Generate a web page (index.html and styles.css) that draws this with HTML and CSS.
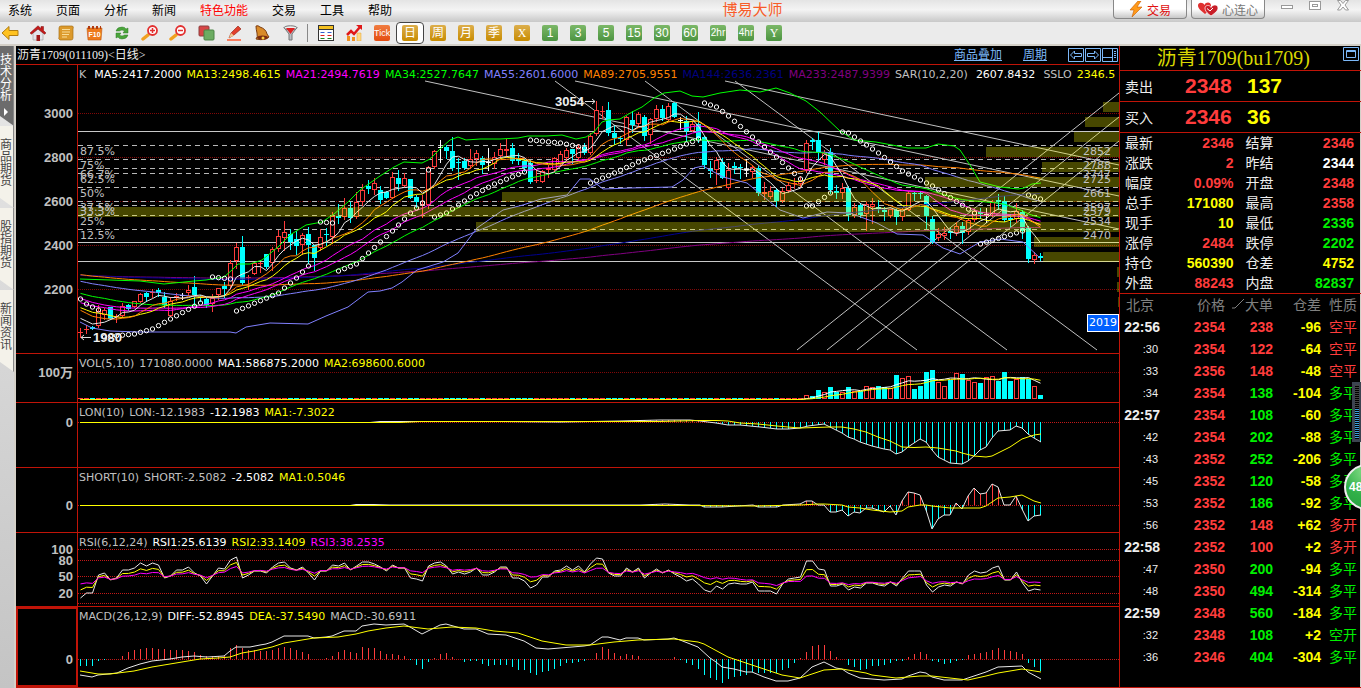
FILE: index.html
```html
<!DOCTYPE html>
<html lang="zh-CN">
<head>
  <meta charset="UTF-8" />
  <meta name="viewport" content="width=device-width, initial-scale=1.0"/>
  <title>博易大师</title>
  <link rel="stylesheet" href="styles.css">
</head>
<body>
  <header class="menubar">
    <nav class="menu">
      <button type="button">系统</button>
      <button type="button">页面</button>
      <button type="button">分析</button>
      <button type="button">新闻</button>
      <button type="button" class="hot">特色功能</button>
      <button type="button">交易</button>
      <button type="button">工具</button>
      <button type="button">帮助</button>
    </nav>
    <h1 class="app-name">博易大师</h1>
    <div class="window-tools">
      <button type="button" class="pill pill-trade">
        <svg width="14" height="16" viewBox="0 0 14 16"><path d="M9 0 1 9h4L3 16 13 6H8l4-6z" fill="#ff9a1a" stroke="#c85a00" stroke-width=".6"/></svg>
        交易
      </button>
      <button type="button" class="pill">
        <svg width="20" height="14" viewBox="0 0 20 14"><path d="M7 12C2 8 0 6 0 3.500C0 0 5 0 6.500 3 8-.5 13 0 13 3.500 13 6 11 9 7 12z" fill="#e03030"/><path d="M13 14C9 11 7 9 7 6c0-3 5-3.500 6-.5C14.500 2 20 2 20 6c0 3-3 5-7 8z" fill="#c81e28" stroke="#fff" stroke-width=".7"/><path d="M9 6.500 12 9l3-3" stroke="#fff" fill="none"/></svg>
        心连心
      </button>
      <div class="win-controls">
        <button type="button" aria-label="最小化"><svg width="14" height="12" viewBox="0 0 14 12"><rect x="1.500" y="5.500" width="11" height="3" fill="#fff" stroke="#999"/></svg></button>
        <button type="button" aria-label="还原"><svg width="14" height="12" viewBox="0 0 14 12"><rect x="1.500" y="1.500" width="11" height="8" fill="#fff" stroke="#999"/><rect x="4.500" y="4.500" width="5" height="2" fill="none" stroke="#999"/></svg></button>
        <button type="button" aria-label="关闭"><svg width="14" height="12" viewBox="0 0 14 12"><path d="M1.500.5h3L7 3.500 9.500.5h3L9 5l3.500 5h-3L7 7l-2.500 3h-3L5 5z" fill="#fff" stroke="#999"/></svg></button>
      </div>
    </div>
  </header>

  <div class="toolbar">
    <button type="button" aria-label="后退"><svg width="18" height="16" viewBox="0 0 18 16"><path d="M1 8 8 1.500v4h9v5H8v4z" fill="#ffc21f" stroke="#b07c10"/></svg></button>
    <button type="button" aria-label="首页"><svg width="18" height="16" viewBox="0 0 18 16"><path d="M4 8v7h10V8L9 4z" fill="#e4e4ea" stroke="#999" stroke-width=".6"/><path d="M1 8 9 .8 12 3.500V1.500h2.500v4L17 8l-1.500 1.200L9 4 2.500 9.200z" fill="#c41a1a" stroke="#7c1010" stroke-width=".5"/><rect x="7.500" y="10" width="3.500" height="6" fill="#a01818"/></svg></button>
    <button type="button" aria-label="记事"><svg width="16" height="16" viewBox="0 0 16 16"><path d="M3 1h11q2 0 1 3v9q0 2-2 2H2q-2-1-1-3V3q0-2 2-2z" fill="#dc9a2c" stroke="#a87018" stroke-width=".7"/><path d="M4 4.500h8M4 7h8M4 9.500h7M4 12h5" stroke="#f8dc98"/></svg></button>
    <button type="button" aria-label="F10"><svg width="17" height="16" viewBox="0 0 17 16"><path d="M1 3h15l-1 12H2z" fill="#ee7a1c" stroke="#c05a10" stroke-width=".6"/><path d="M2 1h2v3H2zM6 1h2v3H6zM10 1h2v3h-2zM14 1h1v3h-1z" fill="#b03a10"/><text x="8.500" y="12" text-anchor="middle" class="glyph-text">F10</text></svg></button>
    <button type="button" aria-label="刷新"><svg width="16" height="16" viewBox="0 0 16 16"><path d="M2 6q1-4 6-4 3 0 4 2l2-1v5H9l1.500-2Q8 4 5.500 6zM14 10q-1 4-6 4-3 0-4-2l-2 1V8h5l-1.500 2Q8 12 10.500 10z" fill="#4aa53a" stroke="#2c7a24" stroke-width=".5"/></svg></button>
    <button type="button" aria-label="放大"><svg width="18" height="16" viewBox="0 0 18 16"><path d="M2 14l5-4" stroke="#f0a020" stroke-width="3.500" stroke-linecap="round"/><circle cx="11.500" cy="5.500" r="4.500" fill="#fff" stroke="#e23030" stroke-width="1.800"/><path d="M9 5.500h5M11.500 3v5" stroke="#e23030" stroke-width="1.500"/></svg></button>
    <button type="button" aria-label="缩小"><svg width="18" height="16" viewBox="0 0 18 16"><path d="M2 14l5-4" stroke="#f0a020" stroke-width="3.500" stroke-linecap="round"/><circle cx="11.500" cy="5.500" r="4.500" fill="#fff" stroke="#e23030" stroke-width="1.800"/><path d="M9 5.500h5" stroke="#e23030" stroke-width="1.500"/></svg></button>
    <button type="button" aria-label="叠加"><svg width="17" height="16" viewBox="0 0 17 16"><rect x="1" y="1" width="10" height="10" rx="1" fill="#d64545" stroke="#8c4040"/><rect x="6" y="5" width="10" height="10" rx="1" fill="#6cac62" stroke="#4a8445"/></svg></button>
    <button type="button" aria-label="画线"><svg width="16" height="16" viewBox="0 0 16 16"><path d="M3 13 5 8 12 1l3 3-7 6z" fill="#e2402c" stroke="#8c2010" stroke-width=".6"/><path d="M3 13l2-5 3 2.500z" fill="#f0c890"/><path d="M1 15h14" stroke="#ff5a30" stroke-width="1.500"/></svg></button>
    <button type="button" aria-label="预警"><svg width="16" height="16" viewBox="0 0 16 16"><path d="M2 1q2-1 4 1 6 2 7 7l2 3q-4 4-13 2 2-2 1-6Q2 4 2 1z" fill="#d98a28" stroke="#7c3c10"/><ellipse cx="8.500" cy="12.500" rx="5.500" ry="2" fill="#7c2c10"/><circle cx="9" cy="13" r="1.500" fill="#ffd040"/></svg></button>
    <button type="button" aria-label="筛选"><svg width="15" height="16" viewBox="0 0 15 16"><path d="M1 2.500h13L9 9v6H6V9z" fill="#b9bdc4" stroke="#777"/><ellipse cx="7.500" cy="2.800" rx="6.500" ry="2" fill="#f0f0f0" stroke="#777"/><path d="M3 3h9L7.500 9z" fill="#e02020"/></svg></button>
    <span class="separator"></span>
    <button type="button" aria-label="报价"><svg width="16" height="16" viewBox="0 0 16 16"><rect x=".5" y=".5" width="15" height="15" fill="#fff" stroke="#333"/><path d="M1 2.500h14" stroke="#f4c020" stroke-width="3"/><path d="M0 4.500h16" stroke="#333"/><path d="M2.500 7.500h4M9.500 7.500h4" stroke="#3060d0"/><path d="M2.500 10.500h4M9.500 10.500h4" stroke="#e02020"/><path d="M2.500 13.500h4M9.500 13.500h4" stroke="#208020"/></svg></button>
    <button type="button" aria-label="走势"><svg width="16" height="16" viewBox="0 0 16 16"><path d="M1 11h3v5H1zM6 12h3v4H6z" fill="#f09020"/><path d="M11 8h4v8h-4z" fill="#ffd880" stroke="#e0a030" stroke-width=".5"/><path d="M1 10 5 6l3 3 6-7" fill="none" stroke="#e01818" stroke-width="2.500"/><path d="M10 0h6v5z" fill="#e01818"/></svg></button>
    <button type="button"><span class="key key-tick">Tick</span></button>
    <button type="button" class="current"><span class="key key-gold">日</span></button>
    <button type="button"><span class="key key-gold">周</span></button>
    <button type="button"><span class="key key-gold">月</span></button>
    <button type="button"><span class="key key-gold">季</span></button>
    <button type="button"><span class="key key-gold key-serif">X</span></button>
    <button type="button"><span class="key">1</span></button>
    <button type="button"><span class="key">3</span></button>
    <button type="button"><span class="key">5</span></button>
    <button type="button"><span class="key">15</span></button>
    <button type="button"><span class="key">30</span></button>
    <button type="button"><span class="key">60</span></button>
    <button type="button"><span class="key key-small">2hr</span></button>
    <button type="button"><span class="key key-small">4hr</span></button>
    <button type="button"><span class="key key-serif">Y</span></button>
  </div>

  <main class="workspace">
    <nav class="side-tabs">
      <button type="button" class="active">技术分析<svg width="6" height="8" viewBox="0 0 6 8"><path d="M1 0l4 4-4 4z" fill="#fff"/></svg></button>
      <button type="button">商品期货</button>
      <button type="button">股指期货</button>
      <button type="button">新闻资讯</button>
    </nav>

    <section class="charts">
      <div class="chart-title">
        <h2>沥青1709(011109)&lt;日线&gt;</h2>
        <a href="#overlay">商品叠加</a>
        <a href="#period">周期</a>
        <div class="nav-icons">
          <button type="button" aria-label="左移"><svg width="16" height="14" viewBox="0 0 16 14"><path d="M.5.5h15v13H.5zM2.500 7l4-4v2.500h7v3h-7V11z"/></svg></button>
          <button type="button" aria-label="右移"><svg width="16" height="14" viewBox="0 0 16 14"><path d="M.5.5h15v13H.5zM13.500 7l-4-4v2.500h-7v3h7V11z"/></svg></button>
          <button type="button" aria-label="布局"><svg width="16" height="14" viewBox="0 0 16 14"><path d="M.5.5h15v13H.5zM10.500 1v12M1 9.500h9M12 3.500h2M12 5.500h2M12 7.500h2M12 9.500h2"/></svg></button>
        </div>
      </div>

      <div class="pane pane-k">
        <div class="axis" id="axis-k"></div>
        <div class="plot">
          <svg id="plot-k" viewBox="78 65 1041 288" preserveAspectRatio="none"></svg>
          <div class="legend">
            <span class="name">K</span>
            <span class="white">MA5:2417.2000</span>
            <span class="yellow">MA13:2498.4615</span>
            <span class="magenta">MA21:2494.7619</span>
            <span class="green">MA34:2527.7647</span>
            <span class="lavender">MA55:2601.6000</span>
            <span class="orange">MA89:2705.9551</span>
            <span class="navy">MA144:2636.2361</span>
            <span class="purple">MA233:2487.9399</span>
            <span class="name">SAR(10,2,20)</span>
            <span class="name white">2607.8432</span>
            <span>SSLO</span>
            <span class="yellow">2346.5</span>
          </div>
          <div id="marks"></div>
          <span class="year">2019</span>
        </div>
      </div>

      <div class="pane pane-vol">
        <div class="axis" id="axis-vol"></div>
        <div class="plot">
          <svg id="plot-vol" viewBox="78 354 1041 48" preserveAspectRatio="none"></svg>
          <div class="legend">
            <span>VOL(5,10)</span>
            <span>171080.0000</span>
            <span class="white">MA1:586875.2000</span>
            <span class="yellow">MA2:698600.6000</span>
          </div>
        </div>
      </div>

      <div class="pane pane-lon">
        <div class="axis" id="axis-lon"></div>
        <div class="plot">
          <svg id="plot-lon" viewBox="78 403 1041 64" preserveAspectRatio="none"></svg>
          <div class="legend">
            <span>LON(10)</span>
            <span>LON:-12.1983</span>
            <span class="white">-12.1983</span>
            <span class="yellow">MA1:-7.3022</span>
          </div>
        </div>
      </div>

      <div class="pane pane-short">
        <div class="axis" id="axis-short"></div>
        <div class="plot">
          <svg id="plot-short" viewBox="78 468 1041 64" preserveAspectRatio="none"></svg>
          <div class="legend">
            <span>SHORT(10)</span>
            <span>SHORT:-2.5082</span>
            <span class="white">-2.5082</span>
            <span class="yellow">MA1:0.5046</span>
          </div>
        </div>
      </div>

      <div class="pane pane-rsi">
        <div class="axis" id="axis-rsi"></div>
        <div class="plot">
          <svg id="plot-rsi" viewBox="78 533 1041 73" preserveAspectRatio="none"></svg>
          <div class="legend">
            <span>RSI(6,12,24)</span>
            <span class="white">RSI1:25.6139</span>
            <span class="yellow">RSI2:33.1409</span>
            <span class="magenta">RSI3:38.2535</span>
          </div>
        </div>
      </div>

      <div class="pane pane-macd">
        <div class="axis selected" id="axis-macd"></div>
        <div class="plot">
          <svg id="plot-macd" viewBox="78 607 1041 80" preserveAspectRatio="none"></svg>
          <div class="legend">
            <span>MACD(26,12,9)</span>
            <span class="white">DIFF:-52.8945</span>
            <span class="yellow">DEA:-37.5490</span>
            <span>MACD:-30.6911</span>
          </div>
        </div>
      </div>
    </section>

    <aside class="quote">
      <div class="quote-title">
        <h2>沥青1709(bu1709)</h2>
        <button type="button" aria-label="最大化"><svg width="16" height="14" viewBox="0 0 16 14"><path d="M.5.5h15v13H.5z"/><path d="M3.500 3.500h9v7h-9zM3.500 4.500h9"/></svg></button>
      </div>
      <div class="level"><span>卖出</span><b class="up">2348</b><b class="yellow">137</b></div>
      <div class="level"><span>买入</span><b class="up">2346</b><b class="yellow">36</b></div>
      <table class="stats">
        <tr><th>最新</th><td class="up">2346</td><th>结算</th><td class="up">2346</td></tr>
        <tr><th>涨跌</th><td class="up">2</td><th>昨结</th><td class="white">2344</td></tr>
        <tr><th>幅度</th><td class="up">0.09%</td><th>开盘</th><td class="up">2348</td></tr>
        <tr><th>总手</th><td class="yellow">171080</td><th>最高</th><td class="up">2358</td></tr>
        <tr><th>现手</th><td class="yellow">10</td><th>最低</th><td class="down">2336</td></tr>
        <tr><th>涨停</th><td class="up">2484</td><th>跌停</th><td class="down">2202</td></tr>
        <tr><th>持仓</th><td class="yellow">560390</td><th>仓差</th><td class="yellow">4752</td></tr>
        <tr><th>外盘</th><td class="up">88243</td><th>内盘</th><td class="down">82837</td></tr>
      </table>
      <table class="ticks">
        <thead>
          <tr><th>北京</th><th>价格</th><th><svg width="14" height="14" viewBox="0 0 14 14"><path d="M1 10h3L13 1" fill="none" stroke="#808080"/></svg>大单</th><th>仓差</th><th>性质</th></tr>
        </thead>
        <tbody>
          <tr><td class="minute">22:56</td><td class="up">2354</td><td class="up">238</td><td>-96</td><td class="up">空平</td></tr>
          <tr><td>:30</td><td class="up">2354</td><td class="up">122</td><td>-64</td><td class="up">空平</td></tr>
          <tr><td>:33</td><td class="up">2356</td><td class="up">148</td><td>-48</td><td class="up">空平</td></tr>
          <tr><td>:34</td><td class="up">2354</td><td class="down">138</td><td>-104</td><td class="down">多平</td></tr>
          <tr><td class="minute">22:57</td><td class="up">2354</td><td class="down">108</td><td>-60</td><td class="down">多平</td></tr>
          <tr><td>:42</td><td class="up">2354</td><td class="down">202</td><td>-88</td><td class="down">多平</td></tr>
          <tr><td>:43</td><td class="up">2352</td><td class="down">252</td><td>-206</td><td class="down">多平</td></tr>
          <tr><td>:45</td><td class="up">2352</td><td class="down">120</td><td>-58</td><td class="down">多平</td></tr>
          <tr><td>:53</td><td class="up">2352</td><td class="down">186</td><td>-92</td><td class="down">多平</td></tr>
          <tr><td>:56</td><td class="up">2352</td><td class="up">148</td><td>+62</td><td class="up">多开</td></tr>
          <tr><td class="minute">22:58</td><td class="up">2352</td><td class="up">100</td><td>+2</td><td class="up">多开</td></tr>
          <tr><td>:47</td><td class="up">2350</td><td class="down">200</td><td>-94</td><td class="down">多平</td></tr>
          <tr><td>:48</td><td class="up">2350</td><td class="down">494</td><td>-314</td><td class="down">多平</td></tr>
          <tr><td class="minute">22:59</td><td class="up">2348</td><td class="down">560</td><td>-184</td><td class="down">多平</td></tr>
          <tr><td>:32</td><td class="up">2348</td><td class="down">108</td><td>+2</td><td class="down">空开</td></tr>
          <tr><td>:36</td><td class="up">2346</td><td class="down">404</td><td>-304</td><td class="down">多平</td></tr>
        </tbody>
      </table>
      <div class="meter"></div>
      <div class="ball">48</div>
    </aside>
  </main>

  <script src="script.js"></script>
</body>
</html>
```

FILE: styles.css
```css
:root {
  --line: #c01408;
  --up: #ff3c3c;
  --down: #00f000;
  --cyan: #00ffff;
  --yellow: #ffff00;
  --magenta: #ff00ff;
  --gray: #c0c0c0;
  --link: #7cb8f8;
}

* {
  box-sizing: border-box;
  margin: 0;
  padding: 0;
}

body {
  height: 100vh;
  display: flex;
  flex-direction: column;
  overflow: hidden;
  background: #000;
  color: var(--gray);
  font-family: "Liberation Sans", "Noto Sans CJK SC", sans-serif;
  font-size: 12px;
}

button {
  background: none;
  border: none;
  color: inherit;
  font: inherit;
  cursor: pointer;
}

svg {
  display: block;
  flex: none;
}

.white { color: #fff; }
.yellow { color: var(--yellow); }
.magenta { color: var(--magenta); }
.green { color: #00ff00; }
.lavender { color: #8080ff; }
.orange { color: #ff8000; }
.navy { color: #000080; }
.purple { color: #800080; }
.up { color: var(--up); }
.down { color: var(--down); }

/* menu */
.menubar {
  flex: none;
  height: 22px;
  display: flex;
  justify-content: space-between;
  padding-left: 8px;
  background: linear-gradient(#e4e4e4, #f4f4f4 45%, #c8c8c8);
  color: #000;
}

.menu {
  display: flex;
  gap: 24px;
}

.menu button {
  line-height: 20px;
}

.menu .hot {
  color: #f00;
}

.app-name {
  color: #f85c28;
  font-size: 15px;
  font-weight: 400;
  line-height: 20px;
}

.window-tools {
  display: flex;
  gap: 4px;
}

.pill {
  width: 74px;
  height: 19px;
  display: flex;
  align-items: center;
  justify-content: center;
  gap: 4px;
  border: 1px solid #888;
  border-top: none;
  border-radius: 0 0 4px 4px;
  background: linear-gradient(#fff 50%, #c8c8c8);
  color: #777;
}

.pill-trade {
  color: #e01010;
}

.win-controls {
  display: flex;
  align-items: flex-start;
  gap: 14px;
  padding: 0 11px;
}

.win-controls button {
  width: 14px;
}

/* toolbar */
.toolbar {
  flex: none;
  height: 24px;
  display: flex;
  align-items: center;
  margin-left: -4px;
  background: #ebebeb;
  border-bottom: 2px solid #d4d0c8;
}

.toolbar button {
  flex: none;
  width: 28px;
  height: 22px;
  display: flex;
  align-items: center;
  justify-content: center;
}

.toolbar .current {
  border: 1px solid #444;
  border-radius: 4px;
  background: #fff;
}

.separator {
  width: 1px;
  height: 18px;
  margin: 0 4px 0 3px;
  background: #888;
}

.glyph-text {
  font: bold 7px "Liberation Sans", sans-serif;
  fill: #fff;
}

.key {
  width: 16px;
  height: 16px;
  border-radius: 2px;
  background: linear-gradient(#7cb868, #4c9440);
  color: #fff;
  font-size: 12px;
  line-height: 16px;
  text-align: center;
}

.key-gold {
  background: linear-gradient(#dcae4c, #c88c00);
}

.key-tick {
  background: linear-gradient(#f07c40, #e44c10);
  font: 9px/16px "Liberation Sans", sans-serif;
}

.key-small {
  font-size: 10px;
}

.key-serif {
  font-family: "Liberation Serif", serif;
}

.workspace {
  flex: 1;
  min-height: 0;
  display: flex;
}

/* left tabs */
.side-tabs {
  flex: none;
  width: 16px;
  background: linear-gradient(#e8e8e8, #c4c4c4);
  border-right: 2px solid #d4d0c8;
}

.side-tabs button {
  width: 14px;
  height: 82px;
  display: flex;
  flex-direction: column;
  align-items: center;
  padding: 13px 1px 0 0;
  background: #f4f2ea;
  border-right: 1px solid #888;
  color: #444;
  line-height: 12px;
  word-break: break-all;
  clip-path: polygon(0 0, 100% 0, 100% 100%, 0 calc(100% - 10px));
}

.side-tabs .active {
  height: 80px;
  gap: 6px;
  padding-top: 8px;
  background: #6c6c6c;
  color: #fff;
}

/* charts */
.charts {
  flex: 1;
  min-width: 0;
  display: flex;
  flex-direction: column;
}

.chart-title {
  flex: none;
  height: 19px;
  display: flex;
  align-items: center;
  gap: 21px;
  padding: 0 1px;
  border-bottom: 1px solid var(--line);
}

.chart-title h2 {
  margin-right: auto;
  color: #eee;
  font: 400 12px/18px "Liberation Serif", "Noto Sans CJK SC", serif;
}

.chart-title a {
  color: var(--link);
  line-height: 16px;
}

.nav-icons {
  display: flex;
  gap: 1px;
}

.nav-icons svg,
.quote-title svg {
  fill: none;
  stroke: var(--link);
}

/* each pane's share leaves out its 1px border */
.pane {
  display: flex;
  min-height: 0;
  border-bottom: 1px solid var(--line);
}

.pane-k { flex: 288 0 0; }
.pane-vol { flex: 48 0 0; }
.pane-lon { flex: 64 0 0; }
.pane-short { flex: 64 0 0; }
.pane-rsi { flex: 73 0 0; }
.pane-macd { flex: 80 0 0; }

.axis {
  position: relative;
  flex: none;
  width: 62px;
  border-right: 1px solid var(--line);
}

.axis.selected {
  outline: 2px solid var(--line);
  outline-offset: -2px;
}

.axis span {
  position: absolute;
  right: 4px;
  margin-top: -8px;
  font-size: 13px;
  font-weight: 700;
  line-height: 16px;
}

.plot {
  position: relative;
  flex: 1;
  min-width: 0;
}

.plot svg {
  position: absolute;
  width: 100%;
  height: 100%;
}

.legend {
  position: relative;
  display: flex;
  gap: 5px;
  overflow: hidden;
  padding: 1px 0 0 1px;
  font: 11px/18px "DejaVu Sans", sans-serif;
  white-space: nowrap;
}

.legend .name {
  margin-right: 3px;
}

.mark {
  position: absolute;
  margin-top: -8px;
  font: 11px/16px "DejaVu Sans", sans-serif;
}

.mark-left { left: 2px; }
.mark-right { right: 8px; }

.mark-price {
  color: #eee;
  font: bold 13px/16px "Liberation Sans", sans-serif;
}

.year {
  position: absolute;
  right: 0;
  bottom: 21px;
  padding: 0 1px;
  border: 1px solid #fff;
  background: #0060ff;
  color: #fff;
  font: 11px/16px "DejaVu Sans", sans-serif;
}

/* chart shapes */
.grid {
  stroke: #c01818;
  stroke-dasharray: 1 1;
}

.grid-dim {
  stroke: #800808;
  stroke-dasharray: 1 1;
}

.level-line {
  stroke: #c8c8c8;
}

.fib {
  stroke: #b8b8b8;
  stroke-dasharray: 5 4;
}

.trend {
  stroke: #c0c0c0;
}

.candle-up {
  fill: #000;
  stroke: var(--up);
}

.candle-down {
  fill: var(--cyan);
  stroke: var(--cyan);
}

.candle-flat {
  fill: #fff;
  stroke: #fff;
}

.profile {
  fill: #ffff00;
  fill-opacity: .28;
}

.sar {
  fill: none;
  stroke: #fff;
}

.curve {
  fill: none;
}

/* quote panel */
.quote {
  position: relative;
  flex: none;
  width: 242px;
  border: solid var(--line);
  border-width: 0 0 1px 1px;
  box-shadow: inset -1px 0 #d4d0c8;
}

.quote-title {
  height: 25px;
  display: flex;
  align-items: flex-start;
  justify-content: flex-end;
  gap: 33px;
  padding: 1px 2px 0 0;
  border-bottom: 1px solid var(--line);
}

.quote-title h2 {
  color: #d8d800;
  font: 400 20px/23px "Liberation Serif", "Noto Sans CJK SC", serif;
}

.level {
  height: 31px;
  display: grid;
  grid-template-columns: 60px 62px 1fr;
  align-items: center;
  padding-left: 5px;
  border-bottom: 1px solid var(--line);
  color: #eee;
  font-size: 14px;
}

.level b {
  font-size: 21px;
}

table {
  border-collapse: collapse;
  table-layout: fixed;
  width: 100%;
  font-size: 14px;
}

th {
  font-weight: 400;
}

.stats {
  border-bottom: 1px solid var(--line);
}

.stats th {
  width: 42px;
  height: 20px;
  padding-left: 5px;
  color: #eee;
  line-height: 20px;
  text-align: left;
}

.stats td {
  padding-right: 7px;
  font-weight: 700;
  line-height: 20px;
  text-align: right;
}

.ticks th,
.ticks td {
  height: 22px;
  line-height: 22px;
  text-align: right;
  white-space: nowrap;
}

.ticks th {
  color: #808080;
}

.ticks th:nth-child(1) { width: 40px; padding-right: 6px; }
.ticks th:nth-child(2) { width: 65px; }
.ticks th:nth-child(3) { width: 48px; }
.ticks th:nth-child(4) { width: 48px; }
.ticks th:nth-child(5) { padding-right: 4px; }

.ticks th svg {
  display: inline-block;
  vertical-align: -2px;
}

.ticks td {
  color: var(--yellow);
  font-weight: 700;
}

.ticks td.up { color: var(--up); }
.ticks td.down { color: var(--down); }

.ticks td:first-child {
  padding-right: 2px;
  color: #eee;
  font-size: 11px;
  font-weight: 400;
}

.ticks td.minute {
  padding-right: 0;
  font-size: 14px;
  font-weight: 700;
}

.ticks td:last-child {
  padding-right: 4px;
  font-weight: 400;
}

.meter {
  position: absolute;
  right: 0;
  top: 336px;
  width: 9px;
  height: 60px;
  border: 3px solid #3c4450;
  border-right-width: 2px;
  background: repeating-linear-gradient(transparent 0 1px, #000 1px 2px), linear-gradient(#444 45%, #3c9cd8 45%);
}

.ball {
  position: absolute;
  right: -29px;
  top: 418px;
  width: 46px;
  height: 46px;
  padding-left: 3px;
  border: 2px solid #eee;
  border-radius: 50%;
  background: radial-gradient(circle at 50% 10%, #8ce08c, #30b048 60%, #28a040);
  color: #fff;
  font: bold 12px/42px "Liberation Sans", sans-serif;
}
```

FILE: script.js
```javascript
const NS = 'http://www.w3.org/2000/svg';
const STEP = 6;
const START = 80.5;
const xAt = i => START + i * STEP;

// high, open/close top, open/close bottom, low, direction
const candles = `328,332,333,337,u 325,329,330,333,u 326,327,329,329,d 305,311,326,327,u 308,310,315,319,u 307,307,319,319,d
314,316,317,322,u 303,306,316,317,u 304,305,309,310,d 301,301,307,307,u 293,294,302,302,u 292,293,297,301,d
289,292,293,297,u 288,290,293,296,d 292,297,305,307,d 297,301,316,316,u 293,296,298,300,u 293,295,296,299,w
285,290,293,295,u 276,287,295,305,d 295,296,298,301,d 297,299,305,307,d 294,298,304,311,u 288,288,295,299,u
282,286,289,297,d 260,263,286,288,u 243,247,261,268,u 236,247,283,284,d 275,277,278,289,u 263,263,274,274,u
262,263,264,272,u 254,254,267,268,d 247,249,263,270,u 230,236,249,251,u 221,232,238,250,u 229,234,242,249,d
231,239,246,254,d 233,235,245,254,u 227,234,245,263,d 245,245,258,270,d 229,237,248,250,u 228,234,235,245,d
212,216,237,243,u 204,216,218,223,d 198,208,217,219,u 202,208,218,222,d 192,202,217,218,u 184,190,202,205,u
180,186,189,193,d 178,183,190,194,u 186,190,200,203,d 191,192,198,198,d 172,177,198,198,u 170,178,184,190,d
173,178,186,187,u 179,179,198,198,d 195,197,202,207,d 195,204,205,217,u 166,167,205,208,u 150,151,167,168,u
140,147,148,162,w 145,147,151,158,d 137,151,168,170,d 158,162,163,179,d 158,161,168,169,d 149,159,166,168,u
150,153,159,165,u 156,158,165,173,d 148,162,163,170,w 152,157,164,168,u 143,149,156,158,u 139,149,151,157,u
143,148,161,163,d 153,158,161,164,d 159,161,168,171,d 160,163,182,183,d 169,180,181,182,u 170,171,182,182,u
165,168,170,177,u 157,158,170,171,u 151,154,164,166,u 148,150,158,160,u 149,149,154,163,d 144,147,158,160,u
143,147,153,154,d 133,136,153,154,u 101,110,134,135,u 106,111,112,118,u 102,110,133,135,d 125,133,138,144,d
136,138,139,143,d 116,117,140,145,u 111,120,125,132,d 112,114,124,127,u 115,117,136,140,d 118,119,135,143,u
105,109,119,121,u 105,109,118,120,d 103,106,120,121,u 102,103,117,117,d 117,120,121,129,w 116,121,131,141,d
121,124,131,131,u 112,124,138,142,d 136,137,165,168,d 161,169,171,177,d 157,160,170,184,u 158,162,178,178,d
163,170,188,189,u 162,166,168,173,d 164,167,168,178,d 159,169,170,176,w 165,167,172,177,u 166,168,193,195,d
182,192,194,199,u 186,191,197,198,u 188,190,201,206,d 188,191,201,202,u 182,185,191,192,u 178,183,184,188,u
176,181,184,187,u 140,143,170,172,u 138,140,142,149,d 132,140,153,160,d 150,153,160,164,u 148,152,190,193,d
185,191,193,198,d 183,188,193,198,u 186,188,215,220,d 203,207,215,217,u 203,205,215,217,d 202,204,214,230,u
198,204,207,223,u 200,207,209,212,d 207,210,212,220,d 207,209,216,217,u 208,210,217,224,d 208,209,217,220,u
191,193,210,210,u 192,193,194,200,d 191,193,194,198,d 195,196,216,228,d 216,219,242,243,d 228,234,238,240,u
227,233,236,239,u 228,231,233,238,d 222,226,233,235,u 222,226,233,243,d 218,220,232,234,u 209,211,220,221,u
208,212,214,218,d 208,214,215,222,w 200,202,214,216,u 194,200,202,209,d 196,201,220,221,d 214,218,220,227,d
203,211,219,222,u 210,212,231,238,d 226,228,259,262,d 252,255,260,263,u 253,256,258,260,d`
  .split(/\s+/).map(s => {
    const p = s.split(',');
    return { high: +p[0], top: +p[1], bottom: +p[2], low: +p[3], dir: p[4] };
  });
const COUNT = candles.length;

// history before the visible range: [bars, level]
const history = [[144, 276], [34, 264], [21, 261], [13, 277], [8, 294], [8, 299], [5, 315]];

function el(parent, tag, attrs) {
  const node = document.createElementNS(NS, tag);
  for (const key in attrs) node.setAttribute(key, attrs[key]);
  parent.appendChild(node);
  return node;
}

function line(svg, x1, y1, x2, y2, cls) {
  const flat = x1 === x2 || y1 === y2;
  el(svg, 'line', { x1, y1, x2, y2, class: cls, 'shape-rendering': flat ? 'crispEdges' : 'auto' });
}

function hline(svg, y, cls) {
  line(svg, 78, y + 0.5, 1119, y + 0.5, cls);
}

function curve(svg, points, color) {
  el(svg, 'polyline', { points: points.map(p => p.join(',')).join(' '), class: 'curve', stroke: color });
}

function parse(text) {
  return text.trim().split(/\s+/).map(p => p.split(',').map(Number));
}

// value of a list of [x, y] points at x
function valueAt(points, x) {
  for (let i = 1; i < points.length; i++) {
    if (x <= points[i][0]) {
      const [x0, y0] = points[i - 1];
      const [x1, y1] = points[i];
      return y0 + (y1 - y0) * (x - x0) / (x1 - x0);
    }
  }
  return points[points.length - 1][1];
}

function average(values, n, offset) {
  const out = [];
  for (let i = offset; i < values.length; i++) {
    const part = values.slice(Math.max(0, i - n + 1), i + 1);
    out.push([xAt(i - offset), part.reduce((a, b) => a + b, 0) / part.length]);
  }
  return out;
}

function bar(svg, i, top, bottom, dir) {
  const cls = dir === 'u' ? 'candle-up' : dir === 'd' ? 'candle-down' : 'candle-flat';
  el(svg, 'rect', {
    x: xAt(i) - 2, y: top + 0.5, width: 4, height: Math.max(bottom - top - 1, 0.1),
    class: cls, 'shape-rendering': 'crispEdges'
  });
}

function label(id, y, text, top, height) {
  const span = document.createElement('span');
  span.textContent = text;
  span.style.top = (y - top) / height * 100 + '%';
  document.getElementById(id).appendChild(span);
  return span;
}

function drawK() {
  const svg = document.getElementById('plot-k');
  [113, 157, 201, 245, 289].forEach(y => hline(svg, y, 'grid-dim'));
  [131, 242, 261].forEach(y => hline(svg, y, 'level-line'));
  [145, 159, 168, 173, 187, 201, 205, 215, 229].forEach(y => hline(svg, y, 'fib'));

  [[425, 81, 1119, 229], [575, 81, 1119, 196], [725, 81, 1119, 165],
    [555, 81, 917, 350], [645, 81, 1007, 350], [735, 81, 1097, 350],
    [797, 350, 1119, 93], [827, 350, 1119, 117], [857, 350, 1119, 141]
  ].forEach(t => line(svg, ...t, 'trend'));

  candles.forEach((c, i) => {
    const cls = c.dir === 'u' ? 'candle-up' : c.dir === 'd' ? 'candle-down' : 'candle-flat';
    line(svg, xAt(i), c.high, xAt(i), c.low + 1, cls);
    bar(svg, i, c.top, c.bottom, c.dir);
  });

  const closes = [];
  history.forEach(([n, level]) => {
    for (let k = 0; k < n; k++) closes.push(level);
  });
  const offset = closes.length;
  candles.forEach(c => closes.push(c.dir === 'u' ? c.top : c.bottom));
  [[233, '#800080'], [144, '#000090'], [89, '#ff8000'], [55, '#8080ff'], [34, '#00ff00'],
    [26, '#ff00ff'], [21, '#ff00ff'], [13, '#ffff00'], [10, '#ff8000'], [5, '#e8e8e8']
  ].forEach(([n, color]) => curve(svg, average(closes, n, offset), color));

  // bands
  curve(svg, parse(`80,279 140,281 164,284 194,281 206,280 224,277 232,270 238,264 250,264 262,260 278,247 290,235
    306,225 322,222 334,214 348,202 360,190 380,176 394,167 404,162 422,163 430,159 440,149 450,140 458,137 466,140
    480,139 500,139 518,138 528,136 546,136 562,135 576,139 586,137 594,132 602,122 608,120 620,119 632,112 642,107
    654,98 664,93 680,91 692,96 703,97 720,93 740,90 760,92 776,88 790,93 806,101 820,112 840,131 854,140 876,142
    908,148 926,148 938,144 954,146 960,150 970,165 980,182 1000,187 1018,189 1024,188 1032,184 1041,183`), '#00ff00');
  curve(svg, parse(`80,322 92,328 110,331 140,332 230,332 236,333 246,327 270,323 308,324 326,316 348,307 368,292
    380,291 392,288 402,282 417,270 443,262 458,253 477,228 503,210 523,205 541,199 567,195 580,179 590,179 603,189
    630,188 672,187 683,180 694,168 703,166 723,177 747,183 780,210 803,218 827,212 850,213 877,223 897,234 923,235
    943,248 960,254 980,242 1000,239 1023,242 1040,258`), '#8080ff');

  // SAR runs as [bar, y] key points
  [
    '0,299 1,304 3,310', '4,337 9,334 12,329 15,319 20,303', '22,277 25,279',
    '26,311 33,293 36,278 38,266', '40,222 42,223', '43,271 46,264 48,253 52,231 55,213 57,203',
    '58,170 58.1,170', '59,217 61,213 65,197 69,184 74,172', '75,140 80,143 84,148',
    '85,183 89,173 93,162 99,149 103,139', '104,103 106,107 108,116 112,137 116,157 120,179',
    '121,206 122,206 125,193', '127,132 128,133 133,153 137,171 142,186 149,213', '150,244 157,231', '158,195 160,199'
  ].forEach(run => {
    const pts = parse(run);
    for (let i = pts[0][0]; i <= pts[pts.length - 1][0]; i++) {
      el(svg, 'circle', { cx: xAt(i), cy: valueAt(pts, i), r: 2.2, class: 'sar' });
    }
  });

  [[1103, 102], [1085, 117], [1074, 132], [986, 147], [1042, 162], [925, 177], [502, 192], [78, 207], [476, 222],
    [1034, 237], [1043, 252], [1117, 267], [1117, 282], [1118, 297]
  ].forEach(([x, y]) => el(svg, 'rect', { x, y, width: 1119 - x, height: 10, class: 'profile' }));

  el(svg, 'path', { d: 'M585 101.500h10M592 99l3 2.500-3 2.500M91 337.500H81M84 335l-3 2.500 3 2.500', class: 'curve', stroke: '#ddd' });

  [[152, '87.5%', '2852'], [166, '75%', '2788'], [175, '66.7%', '2747'], [180, '62.5%', '2725'], [194, '50%', '2661'],
    [208, '37.5%', '2597'], [212, '33.3%', '2579'], [222, '25%', '2534'], [236, '12.5%', '2470']
  ].forEach(([y, left, right]) => {
    label('marks', y, left, 65, 288).className = 'mark mark-left';
    label('marks', y, right, 65, 288).className = 'mark mark-right';
  });
  [[102, 555, '3054'], [338, 93, '1980']].forEach(([y, x, text]) => {
    const mark = label('marks', y, text, 65, 288);
    mark.className = 'mark mark-price';
    mark.style.left = (x - 78) / 1041 * 100 + '%';
  });
  [3000, 2800, 2600, 2400, 2200].forEach((v, i) => label('axis-k', 114 + i * 44, v, 65, 288));
}

function drawVolume() {
  const svg = document.getElementById('plot-vol');
  const tops = [395, 396, 390, 392, 387, 392, 392, 387, 391, 391, 386, 387, 386, 387, 388, 375, 378, 376, 389, 386,
    372, 370, 382, 386, 380, 373, 374, 380, 382, 383, 377, 376, 381, 372, 381, 379, 377, 379, 386, 395];
  hline(svg, 372, 'grid-dim');
  const levels = candles.map((c, i) => i < 121 ? 399.5 : tops[i - 121]);
  levels.forEach((top, i) => bar(svg, i, Math.min(top, 398), 399, candles[i].dir === 'd' ? 'd' : 'u'));
  curve(svg, average(levels, 5, 0), '#fff');
  curve(svg, average(levels, 10, 0), '#ffff00');
  label('axis-vol', 373, '100万', 354, 48);
}

// bars from the zero line to the curve
function histogram(svg, zero, valueOf) {
  for (let i = 0; i < COUNT; i++) {
    const y = Math.round(valueOf(xAt(i)));
    if (y !== zero) line(svg, xAt(i), zero, xAt(i), y, y < zero ? 'candle-up' : 'candle-down');
  }
}

function drawLon() {
  const svg = document.getElementById('plot-lon');
  const lon = parse(`80,422.5 370,422.5 380,421.5 500,421.5 560,422 620,421 660,420 690,420 700,421 716,423 728,425
    740,425 760,427 777,429 788,429 800,428 808,426 824,424 830,427 836,430 842,433 848,437 854,439 860,442 872,446
    884,449 890,450 896,454 902,452 908,447 920,439 926,442 932,450 938,457 950,463 962,464 968,461 974,456 980,450
    986,447 992,438 998,431 1010,430 1016,426 1022,428 1028,434 1034,438 1041,442`);
  hline(svg, 422, 'grid');
  histogram(svg, 422, x => valueAt(lon, x));
  curve(svg, lon, '#e8e8e8');
  curve(svg, parse(`80,422.5 400,422.5 420,421.500 660,421.500 700,420.5 716,420.5 728,421 740,423 758,424 777,426
    788,427 800,428 830,427 842,427 854,429 866,432 878,437 890,441 902,447 914,447.5 926,447 938,448 956,451 962,453
    974,456 986,457 992,456 1004,450 1010,447 1022,439 1028,437 1034,435 1041,434`), '#ffff00');
  label('axis-lon', 423, '0', 403, 64);
}

function drawShort() {
  const svg = document.getElementById('plot-short');
  const data = parse(`80,505.5 350,505.5 356,504.500 374,504.500 390,505 640,505 665,504 690,505 700,505 704,507
    722,507 753,505 758,507 777,507 783,505 800,504 806,501 812,501 818,505 824,505 830,512 836,512 842,510 848,516
    854,512 860,513 866,508 872,508 884,512 890,506 896,515 902,501 908,492 914,493 920,495 926,510 932,529 938,519
    944,515 950,515 956,503 962,509 968,496 974,488 980,494 986,493 992,484 998,487 1004,505 1010,505 1016,496
    1022,509 1028,521 1034,516 1041,515`);
  hline(svg, 505, 'grid');
  histogram(svg, 505, x => valueAt(data, x));
  curve(svg, data, '#e8e8e8');
  curve(svg, parse(`80,505.5 690,505.5 753,506 800,505 818,504 824,504 842,505 848,507 860,508 872,510 890,512
    902,511 908,507 920,505 926,505 932,506 950,508 980,508 986,506 992,502 998,498 1010,497 1022,495 1028,498
    1034,501 1041,503`), '#ffff00');
  label('axis-short', 506, '0', 468, 64);
}

function drawRsi() {
  const svg = document.getElementById('plot-rsi');
  const rsi = [598, 593, 593, 575, 573, 580, 578, 570, 570, 568, 563, 566, 563, 565, 578, 576, 570, 570, 567, 573, 576,
    584, 576, 568, 569, 560, 557, 578, 575, 571, 571, 573, 567, 563, 562, 568, 570, 567, 573, 580, 571, 571, 565, 566,
    563, 570, 566, 562, 562, 564, 567, 571, 565, 568, 568, 578, 579, 581, 566, 563, 562, 566, 574, 572, 574, 572, 568,
    575, 575, 572, 567, 567, 578, 578, 581, 588, 585, 577, 577, 571, 570, 566, 570, 566, 572, 564, 558, 559, 573, 576,
    576, 568, 572, 568, 578, 573, 569, 573, 570, 574, 577, 581, 579, 584, 590, 592, 586, 589, 584, 583, 584, 584, 582,
    591, 591, 591, 594, 584, 579, 578, 577, 561, 561, 569, 570, 586, 586, 584, 590, 587, 588, 583, 583, 585, 586, 582,
    586, 578, 571, 571, 571, 585, 592, 587, 585, 586, 582, 584, 575, 571, 573, 572, 568, 566, 580, 580, 572, 583, 591,
    589, 590];
  const base = average([...Array(24).fill(577), ...rsi], 24, 24).map(p => p[1]);
  const damp = k => rsi.map((v, i) => [xAt(i), base[i] + (v - base[i]) * k]);
  [549, 560, 576, 593, 603].forEach(y => hline(svg, y, 'grid'));
  curve(svg, damp(1), '#e8e8e8');
  curve(svg, damp(0.6), '#ffff00');
  curve(svg, damp(0.3), '#ff00ff');
  [[550, 100], [561, 80], [577, 50], [594, 20]].forEach(([y, v]) => label('axis-rsi', y, v, 533, 73));
}

function drawMacd() {
  const svg = document.getElementById('plot-macd');
  const diff = parse(`80,675 92,677 98,675 117,673 128,668 140,664 152,661 170,659 182,657 194,656 207,657 224,656
    230,651 236,647 250,647 260,645 266,644 272,642 284,636 308,636 314,638 326,637 332,636 344,631 356,631 362,626
    368,625 374,624 386,625 404,624 410,627 422,634 428,631 440,625 446,624 464,629 476,629 488,634 506,635 524,641
    536,648 548,649 572,647 584,646 590,645 602,637 608,637 620,640 626,638 638,638 644,640 668,639 674,638 680,640
    698,647 710,658 716,662 722,667 734,669 746,672 752,672 764,677 776,681 788,681 800,678 812,667 824,662 836,668
    842,669 848,673 860,678 884,680 902,679 908,676 920,672 926,673 932,677 944,680 962,680 968,678 986,672 998,667
    1022,666 1028,672 1041,679`);
  const dea = parse(`80,671 98,674 110,674 134,671 152,667 176,663 194,660 200,659 218,658 230,657 242,653 254,651
    272,647 284,643 302,640 314,638 338,637 356,634 368,631 386,628 404,626 412,627 428,629 452,627 476,628 494,631
    518,633 542,641 566,645 590,645 614,642 638,640 674,639 698,642 704,644 728,657 734,659 758,667 782,675 800,678
    806,676 824,670 842,669 866,673 872,675 896,678 920,676 932,676 968,680 986,676 998,673 1022,669 1041,672`);
  hline(svg, 659, 'grid');
  histogram(svg, 659, x => 659 + 1.8 * (valueAt(diff, x) - valueAt(dea, x)));
  curve(svg, diff, '#e8e8e8');
  curve(svg, dea, '#ffff00');
  label('axis-macd', 660, '0', 607, 80);
}

drawK();
drawVolume();
drawLon();
drawShort();
drawRsi();
drawMacd();
```
